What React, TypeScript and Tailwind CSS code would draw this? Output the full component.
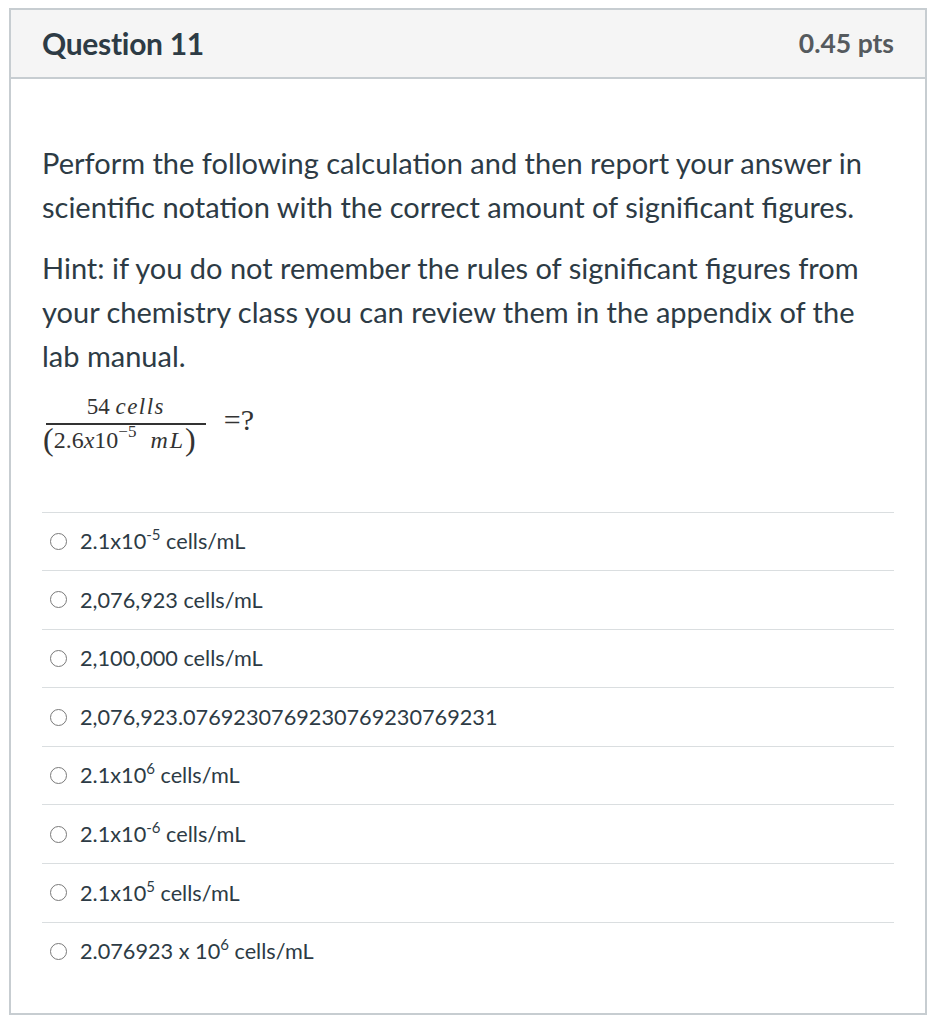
const answers: { pre: string; sup?: string; post?: string }[] = [
  { pre: '2.1x10', sup: '-5', post: ' cells/mL' },
  { pre: '2,076,923 cells/mL' },
  { pre: '2,100,000 cells/mL' },
  { pre: '2,076,923.0769230769230769230769231' },
  { pre: '2.1x10', sup: '6', post: ' cells/mL' },
  { pre: '2.1x10', sup: '-6', post: ' cells/mL' },
  { pre: '2.1x10', sup: '5', post: ' cells/mL' },
  { pre: '2.076923 x 10', sup: '6', post: ' cells/mL' },
]

function Radio() {
  return <span className="w-[17px] h-[17px] rounded-full border-[1.5px] border-[#7a7a7a] bg-white shrink-0" />
}

export default function App() {
  return (
    <div className="bg-white min-h-screen pl-[9px] pt-[8px] pr-[21px] pb-[9px] font-['Lato','Noto_Sans',sans-serif] text-[#2d3b45]">
      <div className="border-2 border-[#c7cdd1] h-[1007px] flex flex-col">
        <div className="h-[69px] bg-[#f5f5f5] border-b-2 border-[#c7cdd1] flex items-center justify-between pl-[31px] pr-[31px] shrink-0">
          <h2 className="text-[30px] font-bold tracking-[-0.3px] text-[#2d3b45]">Question 11</h2>
          <span className="text-[26.5px] font-bold text-[#555a5e]">0.45 pts</span>
        </div>

        <div className="pl-[31px] pr-[31px] pt-[62px]">
          <p className="text-[29px] leading-[44px] mb-[17px]">
            Perform the following calculation and then report your answer in scientific notation with the correct amount of significant figures.
          </p>
          <p className="text-[29px] leading-[44px]">
            Hint: if you do not remember the rules of significant figures from your chemistry class you can review them in the appendix of the lab manual.
          </p>

          <div className="flex items-center mt-[17px] ml-[4px] font-['Liberation_Serif','DejaVu_Serif',serif] text-[#333]">
            <div className="inline-flex flex-col items-stretch">
              <div className="text-[23px] leading-[24px] text-center">
                54 <i className="tracking-[1.5px]">cells</i>
              </div>
              <div className="h-[1.5px] w-full bg-[#333] mt-[4px]" />
              <div className="text-[24px] leading-[30px] flex items-center pr-[10px] -ml-[3px]">
                <span className="text-[32px] leading-[30px] -mt-[2px] font-light">(</span>
                <span>2.6<i>x</i>10</span>
                <span className="text-[17px] leading-[15px] self-start -mt-[1px]">−5</span>
                <i className="ml-[14px] tracking-[2px]">mL</i>
                <span className="text-[32px] leading-[30px] -mt-[2px] font-light">)</span>
              </div>
            </div>
            <span className="ml-[18px] text-[30px] -mt-[10px]">=?</span>
          </div>

          <div className="mt-[57px]">
            {answers.map((a, i) => (
              <div
                key={i}
                className="h-[58.6px] border-t border-[#dadee0] flex items-center gap-[13px] pl-[8px] text-[21.7px]"
              >
                <Radio />
                <span>
                  {a.pre}
                  {a.sup && <sup className="text-[15px] -top-[9px]">{a.sup}</sup>}
                  {a.post}
                </span>
              </div>
            ))}
          </div>
        </div>
      </div>
    </div>
  )
}
